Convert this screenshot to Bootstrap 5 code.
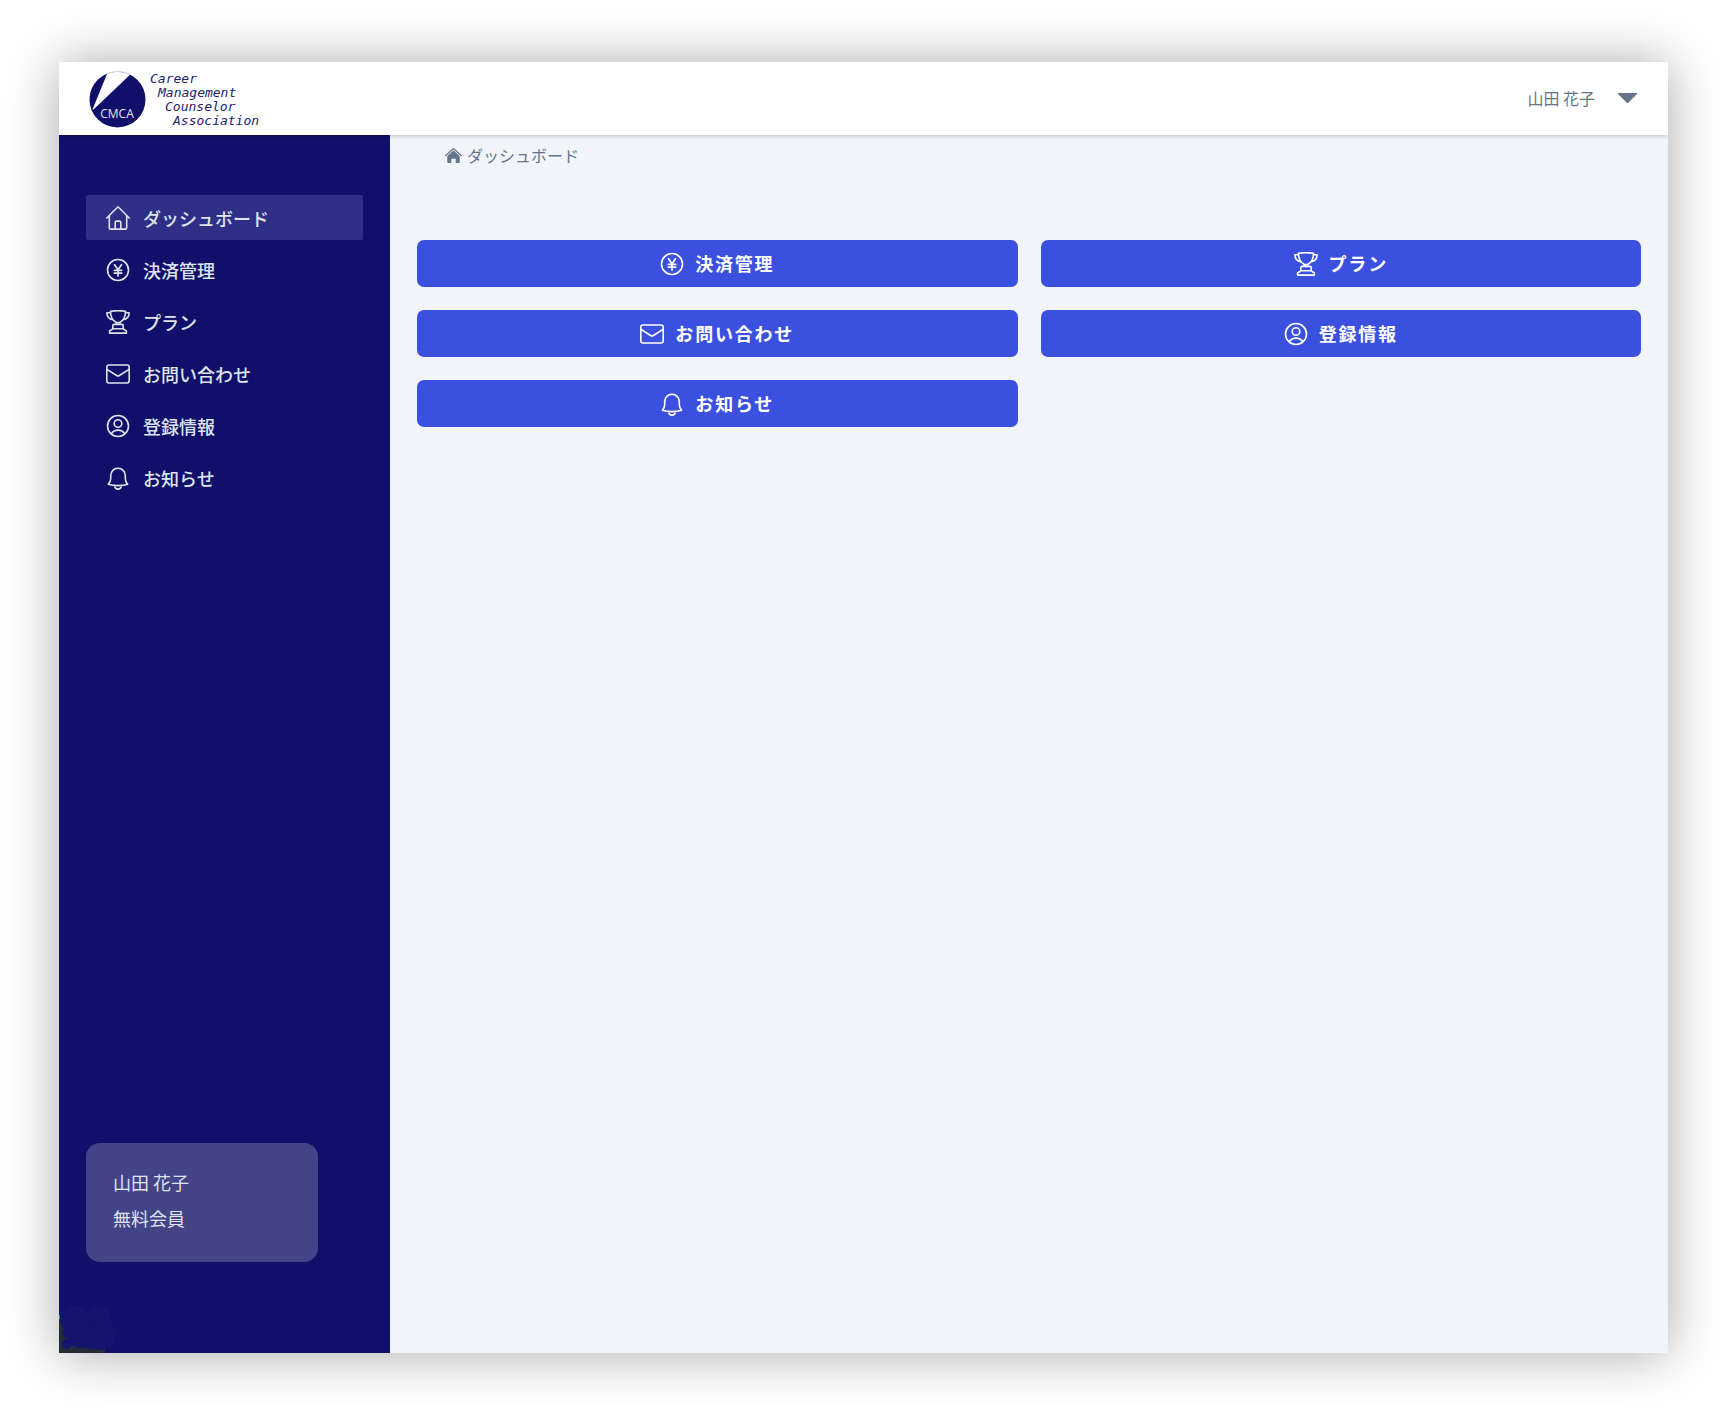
<!DOCTYPE html>
<html lang="ja">
<head>
<meta charset="utf-8">
<meta name="viewport" content="width=device-width, initial-scale=1">
<title>ダッシュボード</title>
<link href="https://cdn.jsdelivr.net/npm/bootstrap@5.3.0/dist/css/bootstrap.min.css" rel="stylesheet">
<style>
  body { background: #fff; font-family: "Noto Sans CJK JP", "Noto Sans", sans-serif; font-size: 16px; line-height: 24px; color: #64748b; padding: 62px 68px 62px 59px; }
  .app-window { min-height: calc(100vh - 124px); background: #f1f5f9; box-shadow: 0 1px 50px rgba(0,0,0,.34); }
  .app-header { height: 73px; padding: 2px 31px 0 30px; box-shadow: 0 1px 4px rgba(0,0,0,.2); clip-path: inset(0 0 -6px 0); z-index: 2; }
  .brand-words { font: italic 13px/14px "DejaVu Sans Mono", monospace; color: #23236f; white-space: pre; margin-left: 4px; }
  .brand-words span:nth-child(2) { padding-left: 8px; }
  .brand-words span:nth-child(3) { padding-left: 15px; }
  .brand-words span:nth-child(4) { padding-left: 23px; }
  .user-toggle { color: #64748b; gap: 23px; padding: 0 0 3px; }
  .app-sidebar { width: 331px; background: #10106a; padding: 60px 27px 91px; }
  .side-menu { gap: 7px; }
  .side-link { height: 45px; padding: 0 20px; gap: 13px; border-radius: 2px; color: #dee4ee; font-size: 18px; line-height: 24px; font-weight: 500; }
  .side-link.active { background: #2f2f88; }
  .side-link:hover { color: #fff; }
  .member-box { width: 232px; padding: 21px 27px 26px; border-radius: 14px; background: #434388; color: #dee4ee; font-size: 18px; line-height: 36px; }
  .corner-art { left: 0; bottom: 0; }
  .app-main { padding: 8px 27px; min-width: 0; }
  .crumb-row { padding-left: 28px; margin-bottom: 73px; }
  .crumb-row a { color: #64748b; gap: 5px; }
  .tile-grid { --bs-gutter-x: 23px; --bs-gutter-y: 23px; }
  .tile-btn { height: 47px; gap: 11px; border-radius: 7px; background: #3c50e0; color: #fff; font-size: 18px; font-weight: 700; letter-spacing: .1em; }
  .tile-btn:hover { background: #3446cc; color: #fff; }
  .line-icon { width: 24px; height: 24px; flex: none; fill: none; stroke: currentColor; stroke-width: 1.6; stroke-linecap: round; stroke-linejoin: round; }
</style>
<script src="https://cdn.jsdelivr.net/npm/bootstrap@5.3.0/dist/js/bootstrap.bundle.min.js"></script>
</head>
<body>
<svg class="d-none" aria-hidden="true">
  <symbol id="i-home" viewBox="0 0 24 24"><path d="M.8 12 11.2 1.5a1.1 1.1 0 0 1 1.6 0L23.200 12M3.300 9.700v12a1.400 1.400 0 0 0 1.400 1.400h14.600a1.400 1.400 0 0 0 1.400-1.400v-12M9.200 23v-6.600a1.300 1.300 0 0 1 1.300-1.300h3a1.300 1.300 0 0 1 1.300 1.300V23"/></symbol>
  <symbol id="i-yen" viewBox="0 0 24 24"><circle cx="12" cy="12" r="10.500"/><path d="m8.500 6.800 3.500 5 3.500-5M12 11.800v6.200M8.300 12.300h7.400M8.300 15.200h7.400" stroke-width="1.700"/></symbol>
  <symbol id="i-cup" viewBox="0 0 24 24"><path d="M4.500 1.200C9 .6 15 .6 19.500 1.200c0 6-2 9.300-5.800 11.300v2h-3.400v-2C6.500 10.500 4.500 7.200 4.500 1.200ZM4.600 2.800H.9c0 4.200 2.200 6.400 6 6.900M19.400 2.800h3.700c0 4.200-2.200 6.400-6 6.900M10.300 14.400H8.200a1.400 1.400 0 0 0-1.400 1.400v3h10.400v-3a1.400 1.400 0 0 0-1.400-1.400h-2.100M6.800 18.800l-3.200 2.200v2.100h16.800V21l-3.200-2.200M10 12.600h4"/></symbol>
  <symbol id="i-mail" viewBox="0 0 24 24"><rect x=".8" y="3" width="22.400" height="18" rx="2.200"/><path d="m1 7.300 9.600 6.200a2.600 2.600 0 0 0 2.800 0L23 7.300"/></symbol>
  <symbol id="i-user" viewBox="0 0 24 24"><circle cx="12" cy="12" r="10.500"/><circle cx="12" cy="9.500" r="3.800"/><path d="M5.300 19.600c1.600-2.400 4-3.500 6.700-3.500s5.100 1.100 6.700 3.500"/></symbol>
  <symbol id="i-bell" viewBox="0 0 24 24"><path d="M2.400 18.200c1.500-1.200 2.300-3.200 2.300-5.600V9.500a7.300 7.300 0 0 1 14.600 0v3.100c0 2.400.8 4.400 2.300 5.600-2.400.9-5.700 1.400-9.600 1.400s-7.200-.5-9.600-1.400ZM8.500 19.400c.2 2.300 1.600 3.700 3.500 3.700s3.300-1.400 3.500-3.700"/></symbol>
</svg>

<div class="app-window d-flex flex-column">
  <header class="app-header bg-white d-flex align-items-center justify-content-between position-relative">
    <a href="#" class="d-flex align-items-center text-decoration-none" aria-label="CMCA">
      <svg width="57" height="57" viewBox="0 0 57 57" aria-hidden="true">
        <circle cx="28.500" cy="28.500" r="28" fill="#10106a"/>
        <path d="M3.500 38.500 18 3A28 28 0 0 1 41 3.800L4.500 38.500Z" fill="#fff"/>
        <path d="M18 2.600A28 28 0 0 1 41 3.400" fill="none" stroke="#dcdce6" stroke-width="1"/>
        <text x="28" y="47" text-anchor="middle" font-family="Open Sans, sans-serif" font-size="12" fill="#e4e4f0">CMCA</text>
      </svg>
      <div class="brand-words d-flex flex-column"><span>Career</span><span>Management</span><span>Counselor</span><span>Association</span></div>
    </a>
    <button type="button" class="user-toggle btn border-0 d-flex align-items-center">
      山田 花子
      <svg width="19" height="10" viewBox="0 0 19 10" aria-hidden="true"><path d="M0 0h19v1L10 10H9L0 1Z" fill="#64748b"/></svg>
    </button>
  </header>

  <div class="d-flex flex-grow-1">
    <aside class="app-sidebar d-flex flex-column justify-content-between flex-shrink-0 position-relative">
      <nav class="side-menu nav flex-column">
        <a href="#" class="side-link active d-flex align-items-center text-decoration-none" aria-current="page"><svg class="line-icon"><use href="#i-home"/></svg>ダッシュボード</a>
        <a href="#" class="side-link d-flex align-items-center text-decoration-none"><svg class="line-icon"><use href="#i-yen"/></svg>決済管理</a>
        <a href="#" class="side-link d-flex align-items-center text-decoration-none"><svg class="line-icon"><use href="#i-cup"/></svg>プラン</a>
        <a href="#" class="side-link d-flex align-items-center text-decoration-none"><svg class="line-icon"><use href="#i-mail"/></svg>お問い合わせ</a>
        <a href="#" class="side-link d-flex align-items-center text-decoration-none"><svg class="line-icon"><use href="#i-user"/></svg>登録情報</a>
        <a href="#" class="side-link d-flex align-items-center text-decoration-none"><svg class="line-icon"><use href="#i-bell"/></svg>お知らせ</a>
      </nav>
      <div class="member-box">
        <div>山田 花子</div>
        <div>無料会員</div>
      </div>
      <svg class="corner-art position-absolute" width="58" height="50" viewBox="0 0 58 50" aria-hidden="true">
        <path d="M0 14 4 22v28h42v-4H18L4 20 0 12Z" fill="#252c38"/>
        <path d="M0 14v36h46V38H12Z" fill="#252c38"/>
        <path d="M0 12h1v4H0Z" fill="#c8485c"/>
        <g fill="#14146c"><circle cx="15" cy="16" r="14"/><circle cx="39" cy="18" r="14"/><circle cx="42" cy="32" r="15"/><circle cx="22" cy="31" r="14"/><circle cx="8" cy="30" r="5"/><circle cx="8" cy="41" r="5"/><circle cx="32" cy="42" r="5"/></g>
      </svg>
    </aside>

    <main class="app-main flex-grow-1">
      <nav class="crumb-row d-flex" aria-label="breadcrumb">
        <a href="#" class="d-flex align-items-center text-decoration-none">
          <svg width="17" height="17" viewBox="0 0 17 17" aria-hidden="true"><path d="M.8 8.500 8.500 1.500l7.700 7" fill="none" stroke="#64748b" stroke-width="1.200" stroke-linecap="round"/><path d="m8.500 3.400 6.200 5.700v5.900a1 1 0 0 1-1 1h-3v-4.300H6.300V16h-3a1 1 0 0 1-1-1V9.100Z" fill="#64748b"/></svg>
          ダッシュボード
        </a>
      </nav>
      <div class="tile-grid row row-cols-1 row-cols-lg-2">
        <div class="col"><a href="#" class="tile-btn btn border-0 w-100 p-0 d-flex align-items-center justify-content-center"><svg class="line-icon"><use href="#i-yen"/></svg>決済管理</a></div>
        <div class="col"><a href="#" class="tile-btn btn border-0 w-100 p-0 d-flex align-items-center justify-content-center"><svg class="line-icon"><use href="#i-cup"/></svg>プラン</a></div>
        <div class="col"><a href="#" class="tile-btn btn border-0 w-100 p-0 d-flex align-items-center justify-content-center"><svg class="line-icon"><use href="#i-mail"/></svg>お問い合わせ</a></div>
        <div class="col"><a href="#" class="tile-btn btn border-0 w-100 p-0 d-flex align-items-center justify-content-center"><svg class="line-icon"><use href="#i-user"/></svg>登録情報</a></div>
        <div class="col"><a href="#" class="tile-btn btn border-0 w-100 p-0 d-flex align-items-center justify-content-center"><svg class="line-icon"><use href="#i-bell"/></svg>お知らせ</a></div>
      </div>
    </main>
  </div>
</div>
</body>
</html>
